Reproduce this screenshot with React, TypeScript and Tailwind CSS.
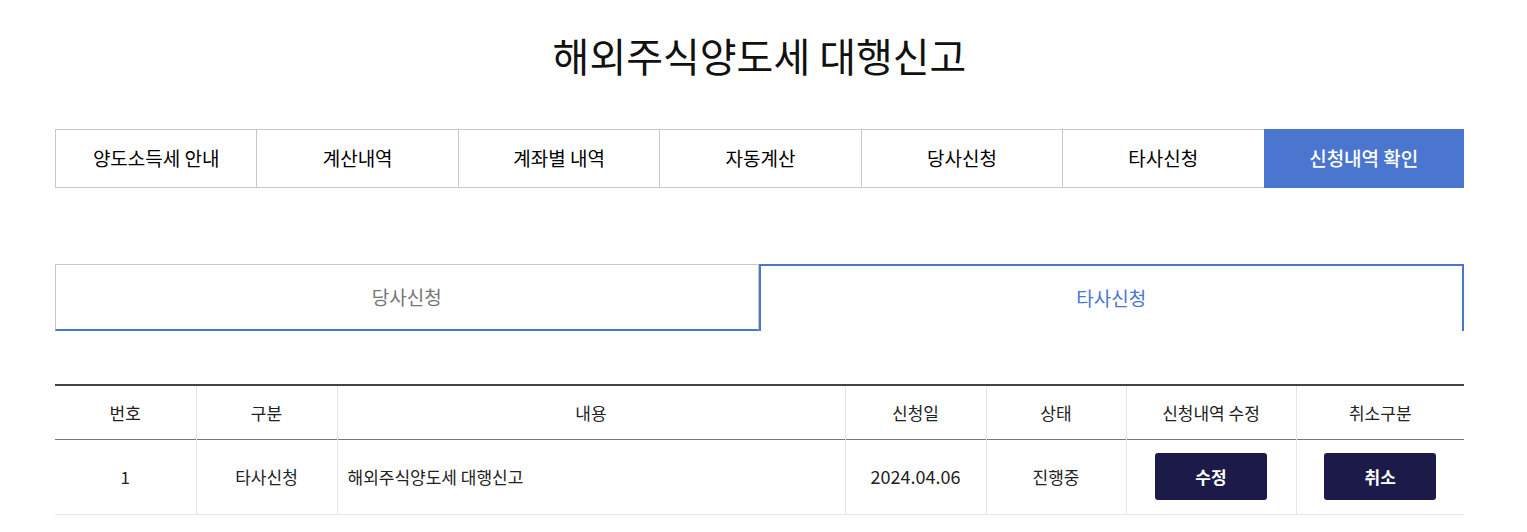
import { FC } from "react";

const topTabs = [
  "양도소득세 안내",
  "계산내역",
  "계좌별 내역",
  "자동계산",
  "당사신청",
  "타사신청",
  "신청내역 확인",
];

const headers = ["번호", "구분", "내용", "신청일", "상태", "신청내역 수정", "취소구분"];
const colWidths = ["141px", "141px", "508px", "141px", "140px", "170px", "168px"];

const App: FC = () => {
  return (
    <div
      className="min-h-[532px] bg-white text-[#111]"
      style={{ fontFamily: '"Noto Sans CJK KR", "Noto Sans", sans-serif' }}
    >
      <div className="w-[1409px] ml-[55px] pt-[31px]">
        <h1 className="text-center text-[40px] leading-[48px] font-normal text-[#111]">
          해외주식양도세 대행신고
        </h1>

        <ul className="mt-[50px] flex h-[59px] border border-[#c8c8c8]">
          {topTabs.map((tab, i) => {
            const active = i === topTabs.length - 1;
            return (
              <li
                key={tab}
                className={`flex-1 flex items-center justify-center text-[19px] ${
                  i > 0 ? "border-l border-[#c8c8c8]" : ""
                } ${active ? "bg-[#4a76d0] text-white -my-px -mr-px border-l-0 font-medium" : "text-[#000] font-normal"}`}
              >
                {tab}
              </li>
            );
          })}
        </ul>

        <div className="mt-[76px] flex h-[67px]">
          <div className="flex-1 flex items-center justify-center border-t border-l border-r border-[#c8c8c8] border-b-2 border-b-[#4a76d0] text-[19px] text-[#777]">
            당사신청
          </div>
          <div className="flex-1 flex items-center justify-center border-2 border-b-0 border-[#4a76d0] text-[19px] text-[#4a76d0]">
            타사신청
          </div>
        </div>

        <table className="mt-[53px] w-full table-fixed border-collapse border-t-2 border-[#444]">
          <colgroup>
            {colWidths.map((w, i) => (
              <col key={i} style={{ width: w }} />
            ))}
          </colgroup>
          <thead>
            <tr className="h-[54px] border-b border-[#777]">
              {headers.map((h, i) => (
                <th
                  key={h}
                  className={`text-[17px] font-normal text-[#222] ${
                    i > 0 ? "border-l border-[#e5e5e5]" : ""
                  }`}
                >
                  {h}
                </th>
              ))}
            </tr>
          </thead>
          <tbody>
            <tr className="h-[75px] border-b border-[#e5e5e5] text-[17px] text-[#222]">
              <td className="text-center">1</td>
              <td className="text-center border-l border-[#e5e5e5]">타사신청</td>
              <td className="pl-[10px] border-l border-[#e5e5e5]">해외주식양도세 대행신고</td>
              <td className="text-center border-l border-[#e5e5e5] text-[18px]">2024.04.06</td>
              <td className="text-center border-l border-[#e5e5e5]">진행중</td>
              <td className="text-center border-l border-[#e5e5e5]">
                <button className="w-[112px] h-[47px] rounded-[3px] bg-[#1c1a48] text-white text-[17px] font-bold">
                  수정
                </button>
              </td>
              <td className="text-center border-l border-[#e5e5e5]">
                <button className="w-[112px] h-[47px] rounded-[3px] bg-[#1c1a48] text-white text-[17px] font-bold">
                  취소
                </button>
              </td>
            </tr>
          </tbody>
        </table>
      </div>
    </div>
  );
};

export default App;
